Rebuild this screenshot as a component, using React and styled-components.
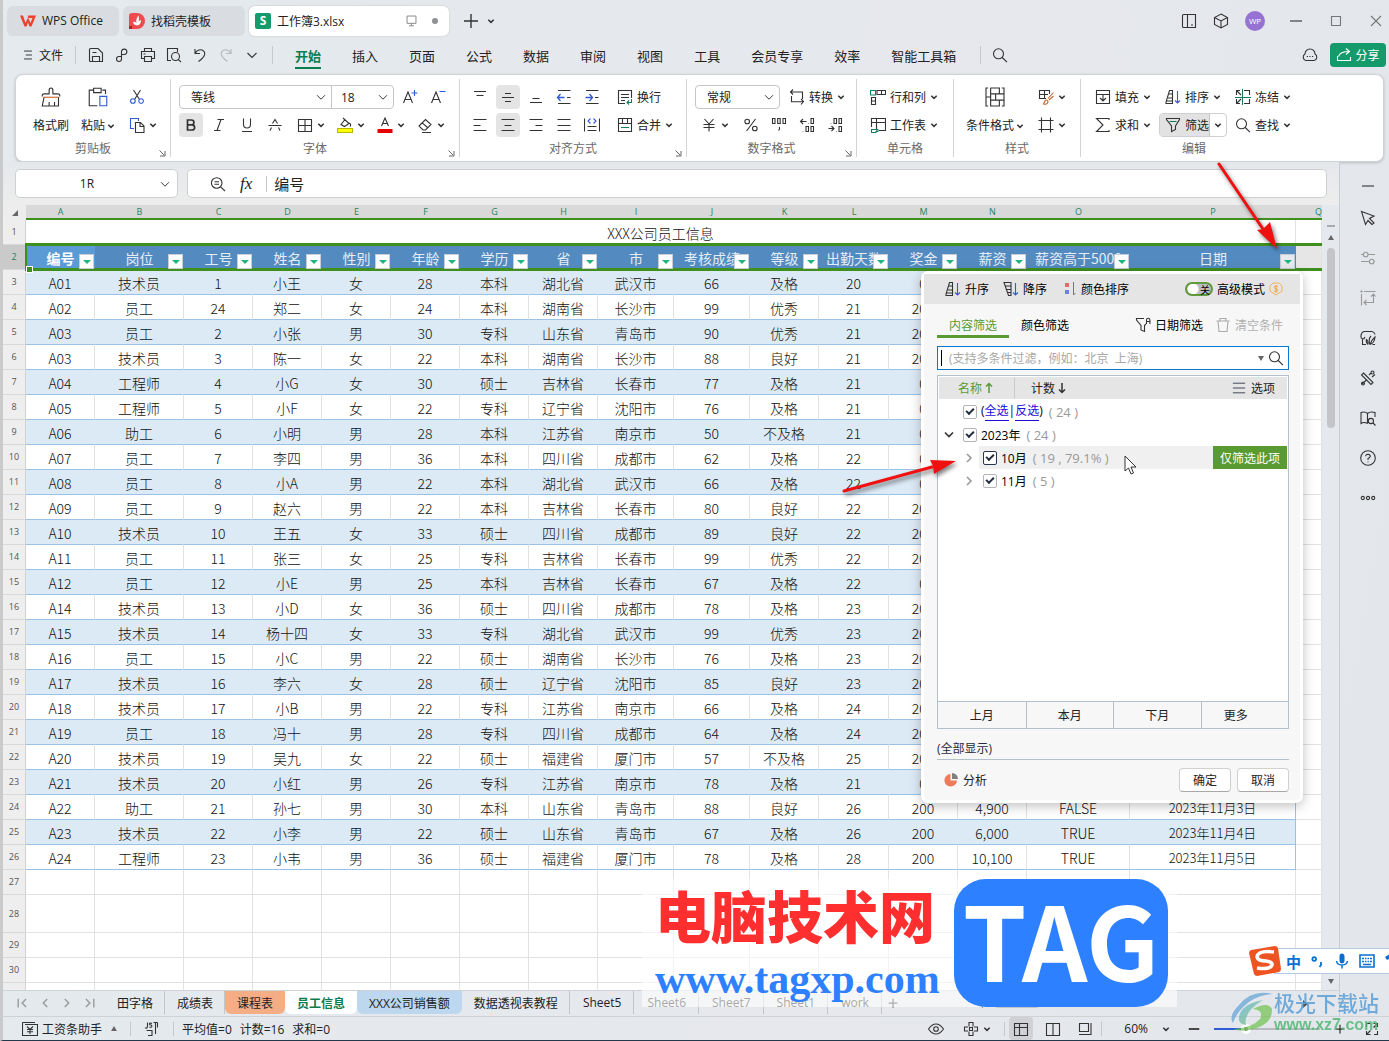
import React from "react";
import styled, { createGlobalStyle, css } from "styled-components";

const INK = "#333";
const BLUE = "#2f5bd8";
const GREEN = "#13805a";
const ORANGE = "#c8642c";
const GREY = "#999";

/* every entry is a list of [path, colour, filled, stroke width] on a 16 x 16 grid */
const ICONS = {
  menu: [["M3.5 3.5H12.5M5.5 8H12.5M3.5 12.5H12.5"]],
  save: [["M1.5 14V2.5Q1.5 1.5 2.5 1.5H10L14.5 6V14.5H2.5Q1.5 14.5 1.5 13.5M4.5 14.5V9.5H11.5V14.5M4.5 5.5H8.5"]],
  link: [["M7 9.5H5A2.5 2.5 0 1 0 7.5 12V4.5A2.7 2.7 0 1 1 10.3 7.5H7"]],
  print: [["M4.5 4.5V1.5H11.5V4.5M4.5 11.5H1.5V4.5H14.5V11.5H11.5M4.5 9.5H11.5V14.5H4.5ZM3.5 7H5.5"]],
  preview: [["M5 13.5H1.5V1.5H11.5V5M15 15L12.3 12.3M13.5 9.5A4 4 0 1 1 5.5 9.5A4 4 0 1 1 13.5 9.5"]],
  undo: [["M3 2V6.5H8M3 6.3Q6 2 10 3Q13.5 4.5 12.5 8Q11.5 11 6.5 14.5"]],
  redo: [["M13 2V6.5H8M13 6.3Q10 2 6 3Q2.5 4.5 3.5 8Q4.5 11 9.5 14.5", "#b5b8bc"]],
  down: [["M3.5 6L8 10.5L12.5 6"]],
  search: [["M11.5 6.8A5 5 0 1 1 1.5 6.8A5 5 0 1 1 11.5 6.8M10.2 10.5L15 15.2"]],
  zoomOut: [["M12 7A5.3 5.3 0 1 1 1.4 7A5.3 5.3 0 1 1 12 7M10.6 10.8L15 15M4.5 5.8H9M4.5 8.2H9"]],
  plus: [["M8 1V15M1 8H15"]],
  minus: [["M2 8H14"]],
  monitor: [["M2.5 2.5H13.5V11.5H2.5ZM8 11.5V14M5 14.5H11", "#888"]],
  panels: [["M6.5 1.5H2.5Q1.5 1.5 1.5 2.5V13.5Q1.5 14.5 2.5 14.5H6.5M6.5 1.5H14.5V14.5H6.5ZM10 12H12"]],
  cube: [["M8 1L14.5 4.5V11.5L8 15L1.5 11.5V4.5ZM1.5 4.5L8 8L14.5 4.5M8 8V15"]],
  square: [["M3.5 3.5H12.5V12.5H3.5Z", "#777"]],
  close: [["M3 3L13 13M13 3L3 13", "#777"]],
  cloud: [["M4 13.5A3.5 3.5 0 0 1 3 7A5 5 0 0 1 13 7A3.5 3.5 0 0 1 12 13.5Z"], ["M4.8 9.5H6M7.4 9.5H8.6M10 9.5H11.2"]],
  share: [["M1.5 9V13.5H14.5V10M2.5 9.5Q4 4.5 13 4.5M10 1.5L13.5 4.5L10 7.5", "#fff"]],
  brush: [["M1 7.5V6.5Q1 5.5 2.5 5.5H6.5V2.5Q6.5 .8 8 .8Q9.500 .8 9.500 2.500V5.500H13.500Q15 5.500 15 6.500V7.500M2.500 8L1 15.200H14V8M10.800 12V15M6.500 12V15"], ["M2 8.200H14", ORANGE]],
  paste: [["M4.500 2.500H1V15H7.500M11.500 2.500H14V5.500M4.500 1H10.500V4.500H4.500Z"], ["M9.500 7.500H15V15H9.500Z", BLUE]],
  cut: [["M4.5 1L10.5 10.5M11.5 1L5.5 10.5"], ["M6.2 12A2.3 2.3 0 1 1 1.6 12A2.3 2.3 0 1 1 6.2 12M14.4 12A2.3 2.3 0 1 1 9.8 12A2.3 2.3 0 1 1 14.4 12", BLUE]],
  copy: [["M5 11.5H1.5V1.5H9.5V4", BLUE], ["M6.5 5.5H11.5L15 9V15.5H6.5ZM11 5.5V9.5H15"]],
  bold: [["M4.5 3H8.5A2.4 2.4 0 0 1 8.5 7.8H4.5ZM4.5 7.8H9A2.6 2.6 0 0 1 9 13H4.5Z", "#333", false, 1.7]],
  italic: [["M6.5 2.5H13M3 13.5H9.5M10 2.5L6 13.5"]],
  under: [["M4.5 1.5V7.5A3.5 3.5 0 0 0 11.5 7.5V1.5M3 14.5H13"]],
  strike: [["M1.5 8.5H14.5M5.5 6.5L8 2.5L10.5 6.5M4.5 10.5L3 13.5M11.5 10.5L13 13.5"]],
  border: [["M1.5 2.5H14.5V14.5H1.5ZM8 2.5V14.5M1.5 8.5H14.5"]],
  fill: [["M6 1L12 6.5L7.5 9.5L4 7.5L8 2.5M12.5 6Q14.5 8 13 9.5"], ["M.5 11.5H15.5V15.5H.5Z", "#b8b800"], ["M1 12H15V15H1Z", "#ffff00", true]],
  color: [["M4.5 9L8 1L11.5 9M5.5 6.5H10.5"], ["M.5 12H15.5V16H.5Z", "#e60000", true]],
  eraser: [["M2 9L8.5 2.5L14 7.5L8.5 13H6ZM5 5.7L11 11M5 15.5H14"]],
  bigger: [["M1.5 14L6 3L10.5 14M3.5 10.5H8.5"], ["M12.5 1V7M9.5 4H15.5", BLUE]],
  smaller: [["M1.5 14L6 3L10.5 14M3.5 10.5H8.5"], ["M9.5 2.5H15.5", BLUE]],
  top: [["M2 2.5H14M4.5 6.5H11.5"]],
  middle: [["M5 4.5H11M2 8.5H14M5 12.5H11"]],
  bottom: [["M4.5 9.5H11.5M2 13.5H14"]],
  outdent: [["M2 1.5H14.5M2 14.5H14.5M11 8.5H14.5"], ["M8.5 8.5H1.5M4.5 5L1.5 8.5L4.5 12", BLUE, false, 1.3]],
  indent: [["M2 1.5H14.5M2 14.5H14.5M11 8.5H14.5"], ["M1.5 8.5H8.5M5.5 5L8.5 8.5L5.5 12", BLUE, false, 1.3]],
  left: [["M1.5 2.5H14.5M1.5 8.5H8.5M1.5 13.5H14.5"]],
  center: [["M1.5 2.5H14.5M4.5 8.5H11.5M1.5 13.5H14.5"]],
  right: [["M1.5 2.5H14.5M7.5 8.5H14.5M1.5 13.5H14.5"]],
  justify: [["M1.5 2.5H14.5M1.5 8.5H14.5M1.5 13.5H14.5"]],
  spread: [["M.5 1.5V14.5M15.5 1.5V14.5M3.5 9.5H12.5M3.5 13.5H12.5"], ["M6.5 1.5L4 4L6.5 6.5M9.5 1.5L12 4L9.5 6.5", BLUE]],
  wrap: [["M8 14.5H1.5V1.5H14.5V9M4 5.5H12M4 8.5H12M4 11.5H8"], ["M14.5 10V13.5H10M12 11.5L10 13.5L12 15.5", GREEN]],
  merge: [["M1.5 1.5H14.5V14.5H1.5ZM1.5 6.5H14.5M5.5 1.5V6.5M10.5 1.5V6.5"], ["M4 10.5H12", GREEN]],
  convert: [["M4 .5L1.5 3L4 5.5M1.5 3H13.5V10M12 10L14.5 12.5L12 15.5M14.5 12.8H2.5V7"]],
  yen: [["M3.5 2L8 7L12.5 2M8 7V14.5M2.5 7.5H13.5M2.5 10.5H13.5"]],
  percent: [["M12.5 2L3.5 14M6.5 4.5A2.3 2.3 0 1 1 1.9 4.5A2.3 2.3 0 1 1 6.5 4.5M14.1 11.5A2.3 2.3 0 1 1 9.5 11.5A2.3 2.3 0 1 1 14.1 11.5"]],
  comma: [["M1.5 1.5H4V6.5H1.5ZM6.7 1.5H9.2V6.5H6.7ZM12 1.5H14.5V6.5H12ZM8.5 10V12L7.5 13.5"]],
  decMore: [["M7.5 4.5H1.5M4 2L1.5 4.5L4 7M9.5 6.5V7M12 1.5H14.5V6.5H12ZM4 14V14.5M7 9.5H9.5V14.5H7ZM12 9.5H14.5V14.5H12Z"]],
  decLess: [["M1.5 11.5H7M4.5 9L7 11.5L4.5 14M4 6V6.5M7 1.5H9.5V6.5H7ZM12 1.5H14.5V6.5H12ZM9.5 14V14.5M12 9.5H14.5V14.5H12Z"]],
  rows: [["M1.5 8.5H5.5V15.5H1.5ZM1.5 12H5.5M7 1.5H15.5V5.5H7ZM11.5 1.5V5.5"], ["M.5 1.5H5.5V6H.5Z", GREEN]],
  sheet: [["M9 13.5H15.5V1.5H1.5V10M1.5 5.5H15.5M6.5 1.5V13.5"], ["M1.5 12.5H8V14.5H6V15.5H1.5Z", GREEN]],
  cond: [["M2.500 .8H.8V15.200H2.500M13.500 .8H15.200V15.200H13.500M4.500 .5V15.500M4.500 .8H11.500V5.500M11.500 10.500V15.200H4.500M4.500 5.500H15M4.500 10.500H15M8.500 5.500V10.500M.8 8H4.500"]],
  style: [["M8 9.5H1.5V1.5H11.5V5M1.5 5.5H10M6.5 1.5V9.5"], ["M15.5 3.5L10 9.5M15.5 7L11 11M5.5 15Q9 16 10 13Q10 11 8.5 11Q7 11 6.5 13Z", ORANGE]],
  frame: [["M3.5 .5V15.5M12.5 .5V15.5M.5 3.5H15.5M.5 12.5H15.5"]],
  insert: [["M4 5.5H1.5V1.5H14.5V5.5H12M1.5 5.5V14.5H14.5V5.5M4 5.5H12M8 5.5V11.5M5 9L8 12L11 9"]],
  sum: [["M14 3V1.5H1.5L8 8L1.5 14.5H14V13"]],
  sort: [["M4.5 1.5H7.5V14.5H1V13ZM4 5H7.5M3 9H7.5M1.5 12H7.5"], ["M12.5 2V14M10 11.5L12.5 14L15 11.5", BLUE]],
  sortDesc: [["M1 1.5H8V14.5H5.5ZM2 5H8M3 8.5H8M5 11.5H8"], ["M12.5 2V14M10 11.5L12.5 14L15 11.5", BLUE]],
  filter: [["M1.5 2.5V1.5H14.5V2.5L10.5 9V12.5L6.5 14.5V9ZM10.5 9V12.5"], ["M4.5 4.5H11.5", GREEN]],
  freeze: [["M5 1.5H1.5V6M1.5 1.5L6 6M9 1.5H14.5V6M1.5 10V14.5H5M2 14L6 10M9 14.5H14.5V10"], ["M0 8.5H16M7.5 0V16", GREEN]],
  cursor: [["M1.5 1.5L14 6L9.5 8.5L14 13L12 14.5L8 10.5L5.5 14.5Z"]],
  sliders: [["M1 4.5H3M8 4.5H15M1 11.5H9M14 11.5H15M8 4.5A2.3 2.3 0 1 1 3.4 4.5A2.3 2.3 0 1 1 8 4.5M14 11.5A2.3 2.3 0 1 1 9.4 11.5A2.3 2.3 0 1 1 14 11.5", GREY]],
  swap: [["M1.5 4V15.5M4 1.5H15.5M4 12.5H13.5V4.5M11 6.5L13.5 4L15.5 6.5M6.5 10L4 12.5L6.5 15", GREY], ["M.5.5H2.5V2.5H.5Z", GREY, true]],
  leafBox: [["M6 14.500H2.500V9M2.500 9Q.5 8 1 5.500Q1.500 2 4 1.500H12Q14.500 2 15 4.500M2.500 9Q4.500 9 5 7M8 14.500Q5.500 12 6.500 9.500Q8.500 11 8 14.500M10 14.500Q8 9 11 6M10 14.500Q14.500 13 15 7Q11.500 10 10 14.500M12.500 14.500H15"]],
  tools: [["M3.5 3L13 12.5L11 14.5L1.5 5ZM9 5L11.5 2.5M2 14L7 9.5M15 4.5L12 7M3 12A1.5 1.5 0 1 0 3 15A1.5 1.5 0 1 0 3 12M12.5 1A1.5 1.5 0 1 0 12.5 4A1.5 1.5 0 1 0 12.5 1"]],
  book: [["M7.5 13.5Q4 11.5 1 13.5V2.5Q5 1 7.5 3.5Q10 1 15 2.5V7M7.5 3.5V13.5M13.5 11A2.6 2.6 0 1 1 8.3 11A2.6 2.6 0 1 1 13.5 11M13 13L15.5 15.5"]],
  help: [["M15.3 8A7.3 7.3 0 1 1 .7 8A7.3 7.3 0 1 1 15.3 8M5.7 6.3Q5.8 4.3 8 4.3Q10.3 4.5 10.2 6.3Q10 7.5 8 8.5V10M8 11.5V12.3"]],
  more: [["M4.400 8A1.600 1.600 0 1 1 1.200 8A1.600 1.600 0 1 1 4.400 8M9.600 8A1.600 1.600 0 1 1 6.400 8A1.600 1.600 0 1 1 9.600 8M14.800 8A1.600 1.600 0 1 1 11.600 8A1.600 1.600 0 1 1 14.800 8"]],
  first: [["M2.5 3V13M11.5 3.5L7 8L11.5 12.5", GREY]],
  prev: [["M10.5 3.5L6 8L10.5 12.5", GREY]],
  next: [["M5.5 3.5L10 8L5.5 12.5", GREY]],
  last: [["M13.5 3V13M4.5 3.5L9 8L4.5 12.5", GREY]],
  salary: [["M.5 1.5H13M.5 1.5V14.5H15.5V3.5H3M5 5.5L8 8.5L11 5.5M8 8.5V13M5 8.5H11M5 10.8H11"]],
  stp: [["M1.5 6.5V7Q3.5 7.5 3.5 5V1.5M8 2.5Q5.5 1.5 5.5 3Q5.5 4 7 4Q8.5 5 7.5 6Q6 6.5 5.5 6M9.5 1.5H13.5M11.5 1.5V13M13.5 1.5V6.5M2.5 9.5H8V14.5H4"]],
  eye: [["M.5 8Q4 3 8 3Q12 3 15.5 8Q12 13 8 13Q4 13 .5 8ZM10.3 8A2.3 2.3 0 1 1 5.7 8A2.3 2.3 0 1 1 10.3 8"]],
  target: [["M6 5.5V1.5H10V5.5M6 10.5V14.5H10V10.5M5 6H1.5V10H5M11 6H14.5V10H11M6.5 6.5H9.5V9.5H6.5Z"]],
  gridView: [["M1.5 2.5H14.5V14.5H1.5ZM1.5 6.5H14.5M6.5 2.5V14.5"]],
  pages: [["M1.5 2.5H14.5V14.5H1.5ZM8 2.5V14.5"]],
  layout: [["M2.5 2.5H11.5V10.5H2.5ZM14 2V13.5H2"]],
  full: [["M9.5 2.5H13.5V6M13.5 2.5L9.5 6.5M6.5 13.5H2.5V10M2.5 13.5L6.5 9.5M2.5 6V2.5H6M13.5 10V13.5H10"]],
  lines: [["M1 2.5H15M1 8H15M1 13.5H15", "#3d4453"]],
  dateFilter: [["M9 1.5H1.5V3L6 8.5V13L9.5 14.5V8.5L11 7M11.5 7V3A1.7 1.7 0 0 1 14.9 3V7M11.5 4.5H14.9"]],
  trash: [["M1.5 4H14.5M5 3.5V1.5H11V3.5M3 4L4 14.5H12L13 4", "#aaa"]],
};

const Svg = styled.svg`
  display: block;
  flex: none;
`;

const Icon = ({ name, size = 16, width = 1.1 }) => (
  <Svg width={size} height={size} viewBox="0 0 16 16" fill="none" aria-hidden="true">
    {ICONS[name].map(([d, color = INK, filled, w], i) => (
      <path
        key={i}
        d={d}
        stroke={filled ? "none" : color}
        fill={filled ? color : "none"}
        strokeWidth={w || width}
      />
    ))}
  </Svg>
);

const Caret = () => (
  <Svg width="8" height="8" viewBox="0 0 8 8" fill="none" aria-hidden="true">
    <path d="M1.3 2.8L4 5.4L6.7 2.8" stroke="#333" strokeWidth="1.5" />
  </Svg>
);

export default function App() {
  return (
    <Window>
      <GlobalStyle />
      <TitleBar />
      <MenuBar />
      <Ribbon />
      <Body>
        <Workspace>
          <FormulaBar />
          <SheetArea>
            <Sheet />
            <ScrollTrack>
              <Minus />
              <Triangle />
              <ScrollThumb />
              <Triangle $down />
            </ScrollTrack>
            <FilterPanel />
            <TagMark />
          </SheetArea>
          <SheetTabs />
        </Workspace>
        <SidePane>
          {["minus", "cursor", "sliders", "swap", "leafBox", "tools", "book", "help", "more"].map((n) => (
            <SideButton key={n} aria-label={n}>
              <Icon name={n} />
            </SideButton>
          ))}
        </SidePane>
      </Body>
      <StatusBar />
      <Ime />
      <Arrows />
      <SiteMark />
    </Window>
  );
}

function TitleBar() {
  return (
    <Title>
      <DocTab $w={112}>
        <Svg width="16" height="12" viewBox="0 0 16 12" fill="none">
          <path d="M0 .5H3L5.500 8L8 2.500L10.500 8L12.500 3H8V.5H16L11.500 11.500H9.500L8 7.500L6.500 11.500H4.500Z" fill="#f0402c" />
        </Svg>
        WPS Office
      </DocTab>
      <DocTab $w={122}>
        <Svg width="16" height="16" viewBox="0 0 16 16">
          <path d="M3 0H8A8 8 0 0 1 8 16H0V3Q0 0 3 0Z" fill="#ee4b4f" />
          <path d="M0 13H3V16H0Z" fill="#a8262c" />
          <path d="M4 9Q6 8 7.5 10Q6.500 6 9.500 2.500Q10.500 6 9.500 8.500Q11 7 12 7Q12 12 8 12.500Q4.500 12 4 9Z" fill="#fff" />
        </Svg>
        找稻壳模板
      </DocTab>
      <DocTab $w={200} $active>
        <SheetLogo>S</SheetLogo>
        <span>工作簿3.xlsx</span>
        <TabTools>
          <Icon name="monitor" size={13} width={1.2} />
          <Dot />
        </TabTools>
      </DocTab>
      <TitleButton aria-label="新建">
        <Icon name="plus" width={1.4} />
      </TitleButton>
      <Caret />
      <TitleRight>
        <Icon name="panels" />
        <Icon name="cube" />
        <Avatar>WP</Avatar>
        <WindowButtons>
          <Icon name="minus" />
          <Icon name="square" />
          <Icon name="close" />
        </WindowButtons>
      </TitleRight>
    </Title>
  );
}

function MenuBar() {
  const menus = ["开始", "插入", "页面", "公式", "数据", "审阅", "视图", "工具", "会员专享", "效率", "智能工具箱"];
  return (
    <Menu>
      <FileButton>
        <Icon name="menu" size={14} />
        文件
      </FileButton>
      <Rule $h={18} />
      <QuickTools>
        {["save", "link", "print", "preview", "undo", "redo", "down"].map((n) => (
          <QuickButton key={n} aria-label={n}>
            <Icon name={n} />
          </QuickButton>
        ))}
      </QuickTools>
      <Rule $h={18} />
      <MenuTabs>
        {menus.map((m, i) => (
          <MenuTab key={m} $active={i === 0}>{m}</MenuTab>
        ))}
      </MenuTabs>
      <Rule $h={18} />
      <QuickButton aria-label="搜索">
        <Icon name="search" />
      </QuickButton>
      <MenuRight>
        <Icon name="cloud" />
        <ShareButton>
          <Icon name="share" />
          分享
        </ShareButton>
      </MenuRight>
    </Menu>
  );
}

const Tools = ({ names, active }) =>
  names.map((n) => (
    <ToolButton key={n} $active={n === active} aria-label={n}>
      <Icon name={n} />
    </ToolButton>
  ));

const SplitTool = ({ name }) => (
  <SplitButton aria-label={name}>
    <Icon name={name} />
    <Caret />
  </SplitButton>
);

const TextTool = ({ name, caret = true, children }) => (
  <TextButton>
    <Icon name={name} />
    {children}
    {caret && <Caret />}
  </TextButton>
);

const Group = ({ label, width, pad, launcher, children }) => (
  <RibbonGroup $w={width}>
    <GroupBody $pad={pad}>{children}</GroupBody>
    <GroupFoot>
      <GroupLabel>{label}</GroupLabel>
      {launcher && (
        <Launcher aria-label={label + "设置"}>
          <Svg width="7" height="7" viewBox="0 0 7 7" fill="none">
            <path d="M.5.5L5 5M6 1V6H1" stroke="#666" />
          </Svg>
        </Launcher>
      )}
    </GroupFoot>
  </RibbonGroup>
);

function Ribbon() {
  return (
    <RibbonCard>
      <Group label="剪贴板" width={155} pad={17} launcher>
        <ToolColumns $gap={12}>
          <BigButton>
            <Icon name="brush" size={20} width={0.9} />
            <span>格式刷</span>
          </BigButton>
          <BigButton>
            <Icon name="paste" size={20} width={0.9} />
            <BigLabel>粘贴<Caret /></BigLabel>
          </BigButton>
          <ToolStack>
            <ToolRow>
              <SplitButton aria-label="剪切"><Icon name="cut" /></SplitButton>
            </ToolRow>
            <ToolRow><SplitTool name="copy" /></ToolRow>
          </ToolStack>
        </ToolColumns>
      </Group>
      <Group label="字体" width={289} pad={8} launcher>
        <ToolRow>
          <Combo $w={153} $join="left">
            <select aria-label="字体" defaultValue="等线"><option>等线</option></select>
            <Icon name="down" size={14} />
          </Combo>
          <Combo $w={63} $join="right">
            <select aria-label="字号" defaultValue="18"><option>18</option></select>
            <Icon name="down" size={14} />
          </Combo>
          <Tools names={["bigger", "smaller"]} />
        </ToolRow>
        <ToolRow>
          <Tools names={["bold", "italic", "under", "strike"]} active="bold" />
          <SplitTool name="border" />
          <SplitTool name="fill" />
          <SplitTool name="color" />
          <SplitTool name="eraser" />
        </ToolRow>
      </Group>
      <Group label="对齐方式" width={227} pad={8} launcher>
        <ToolRow>
          <Tools names={["top", "middle", "bottom", "outdent", "indent"]} active="middle" />
          <Spacer />
          <TextTool name="wrap" caret={false}>换行</TextTool>
        </ToolRow>
        <ToolRow>
          <Tools names={["left", "center", "right", "justify", "spread"]} active="center" />
          <Spacer />
          <TextTool name="merge">合并</TextTool>
        </ToolRow>
      </Group>
      <Group label="数字格式" width={170} pad={8} launcher>
        <ToolRow>
          <Combo $w={85}>
            <select aria-label="数字格式" defaultValue="常规"><option>常规</option></select>
            <Icon name="down" size={14} />
          </Combo>
          <TextTool name="convert">转换</TextTool>
        </ToolRow>
        <ToolRow>
          <SplitTool name="yen" />
          <Spacer />
          <Tools names={["percent", "comma", "decMore", "decLess"]} />
        </ToolRow>
      </Group>
      <Group label="单元格" width={97} pad={8}>
        <ToolRow><TextTool name="rows">行和列</TextTool></ToolRow>
        <ToolRow><TextTool name="sheet">工作表</TextTool></ToolRow>
      </Group>
      <Group label="样式" width={127} pad={12}>
        <ToolColumns $gap={12}>
          <BigButton>
            <Icon name="cond" size={20} width={0.9} />
            <BigLabel>条件格式<Caret /></BigLabel>
          </BigButton>
          <ToolStack>
            <ToolRow><SplitTool name="style" /></ToolRow>
            <ToolRow><SplitTool name="frame" /></ToolRow>
          </ToolStack>
        </ToolColumns>
      </Group>
      <Group label="编辑" width={226} pad={9}>
        <ToolRow>
          <TextTool name="insert">填充</TextTool>
          <TextTool name="sort">排序</TextTool>
          <TextTool name="freeze">冻结</TextTool>
        </ToolRow>
        <ToolRow>
          <TextTool name="sum">求和</TextTool>
          <FilterSplit>
            <button><Icon name="filter" />筛选</button>
            <button aria-label="筛选选项"><Caret /></button>
          </FilterSplit>
          <TextTool name="search">查找</TextTool>
        </ToolRow>
      </Group>
    </RibbonCard>
  );
}

function FormulaBar() {
  return (
    <Formula>
      <NameBox>
        <input aria-label="名称框" defaultValue="1R" />
        <Icon name="down" size={14} />
      </NameBox>
      <FormulaBox>
        <Icon name="zoomOut" />
        <Fx>fx</Fx>
        <Rule $h={16} />
        <input aria-label="编辑栏" defaultValue="编号" />
      </FormulaBox>
    </Formula>
  );
}

const COLUMNS = [
  ["A", 69, "编号"], ["B", 89, "岗位"], ["C", 69, "工号"], ["D", 69, "姓名"],
  ["E", 69, "性别"], ["F", 69, "年龄"], ["G", 69, "学历"], ["H", 69, "省"],
  ["I", 76, "市"], ["J", 76, "考核成绩"], ["K", 69, "等级"], ["L", 70, "出勤天数"],
  ["M", 69, "奖金"], ["N", 69, "薪资"], ["O", 103, "薪资高于5000"], ["P", 166, "日期"],
];

const ROWS = `A01,技术员,1,小王,女,28,本科,湖北省,武汉市,66,及格,20,0
A02,员工,24,郑二,女,24,本科,湖南省,长沙市,99,优秀,21,200
A03,员工,2,小张,男,30,专科,山东省,青岛市,90,优秀,21,200
A03,技术员,3,陈一,女,22,本科,湖南省,长沙市,88,良好,21,200
A04,工程师,4,小G,女,30,硕士,吉林省,长春市,77,及格,21,0
A05,工程师,5,小F,女,22,专科,辽宁省,沈阳市,76,及格,21,0
A06,助工,6,小明,男,28,本科,江苏省,南京市,50,不及格,21,0
A07,员工,7,李四,男,36,本科,四川省,成都市,62,及格,22,0
A08,员工,8,小A,男,22,本科,湖北省,武汉市,66,及格,22,0
A09,员工,9,赵六,男,22,本科,吉林省,长春市,80,良好,22,200
A10,技术员,10,王五,女,33,硕士,四川省,成都市,89,良好,22,200
A11,员工,11,张三,女,25,专科,吉林省,长春市,99,优秀,22,200
A12,员工,12,小E,男,25,本科,吉林省,长春市,67,及格,22,0
A14,技术员,13,小D,女,36,硕士,四川省,成都市,78,及格,23,200
A15,技术员,14,杨十四,女,33,专科,湖北省,武汉市,99,优秀,23,200
A16,员工,15,小C,男,22,硕士,湖南省,长沙市,76,及格,23,200
A17,技术员,16,李六,女,28,硕士,辽宁省,沈阳市,85,良好,23,200
A18,技术员,17,小B,男,22,专科,江苏省,南京市,66,及格,24,200
A19,员工,18,冯十,男,28,专科,四川省,成都市,64,及格,24,200
A20,技术员,19,吴九,女,22,硕士,福建省,厦门市,57,不及格,25,200
A21,技术员,20,小红,男,26,专科,江苏省,南京市,78,及格,21,0
A22,助工,21,孙七,男,30,本科,山东省,青岛市,88,良好,26,200,4;900,FALSE,2023年11月3日
A23,技术员,22,小李,男,22,硕士,山东省,青岛市,67,及格,26,200,6;000,TRUE,2023年11月4日
A24,工程师,23,小韦,男,36,硕士,福建省,厦门市,78,及格,28,200,10;100,TRUE,2023年11月5日`
  .split("\n")
  .map((line) => line.split(",").map((v) => v.replace(";", ",")));

function Sheet() {
  return (
    <SheetPane>
      <Table>
        <colgroup>
          <Col $w={23} />
          {COLUMNS.map(([k, w]) => <Col key={k} $w={w} />)}
          <col />
        </colgroup>
        <thead>
          <tr>
            <Corner aria-label="全选"><i /></Corner>
            {COLUMNS.map(([k]) => <ColHead key={k}>{k}</ColHead>)}
            <ColHead $cut>Q</ColHead>
          </tr>
        </thead>
        <tbody>
          <tr>
            <RowHead>1</RowHead>
            <Cell colSpan={16}>XXX公司员工信息</Cell>
            <Cell />
          </tr>
          <tr>
            <RowHead $active>2</RowHead>
            {COLUMNS.map(([k, , name], i) => (
              <HeadCell key={k} $first={i === 0}>
                {name}
                <FilterArrow aria-label={name + "筛选"} $dim={k === "P"} />
              </HeadCell>
            ))}
            <Cell $tail />
          </tr>
          {ROWS.map((row, r) => (
            <tr key={r}>
              <RowHead>{r + 3}</RowHead>
              {COLUMNS.map(([k], c) => (
                <Cell key={k} $data $band={r % 2 === 0} $date={k === "P"}>{row[c]}</Cell>
              ))}
              <Cell />
            </tr>
          ))}
          {["27", "28", "29", "30", ""].map((n) => (
            <tr key={n}>
              <RowHead $tall={n === "28"}>{n}</RowHead>
              {COLUMNS.map(([k]) => <Cell key={k} />)}
              <Cell />
            </tr>
          ))}
        </tbody>
      </Table>
      <Selection />
      <FillHandle />
    </SheetPane>
  );
}

const TreeItem = ({ level, open, checked = true, count, active, children }) => (
  <TreeRow $level={level}>
    <Expander aria-label="展开">
      {open !== undefined && (
        <Svg width="10" height="10" viewBox="0 0 10 10" fill="none">
          <path d={open ? "M1 2.500L5 6.500L9 2.500" : "M3 1L7 5L3 9"} stroke={open ? "#333" : "#999"} strokeWidth="1.6" />
        </Svg>
      )}
    </Expander>
    <TreeLine $active={active}>
      <Check>
        <input type="checkbox" defaultChecked={checked} />
        {children}
      </Check>
      <Count>{count}</Count>
      {active && <OnlyButton>仅筛选此项</OnlyButton>}
    </TreeLine>
  </TreeRow>
);

function FilterPanel() {
  return (
    <Panel>
      <PanelTop>
        <PanelTool><Icon name="sort" />升序</PanelTool>
        <PanelTool><Icon name="sortDesc" />降序</PanelTool>
        <PanelTool>
          <Svg width="16" height="14" viewBox="-4 0 16 14" fill="none">
            <path d="M0 1H4V5H0Z" fill="#e86a6a" />
            <path d="M0 8H4V12H0Z" fill="#6a7fe8" />
            <path d="M8.500 0V13L10.500 11" stroke="#777" />
          </Svg>
          颜色排序
        </PanelTool>
        <ModeLabel>
          <Switch type="checkbox" />
          <SwitchText>关</SwitchText>
          高级模式
          <Svg width="14" height="14" viewBox="0 0 14 14" fill="none">
            <path d="M4 1H10L13 4V9L7 13L1 9V4Z" stroke="#f0b35a" />
            <path d="M9 4.500Q5 3.500 5.200 5.500Q5.500 6.500 7 6.700Q9 7 8.800 8.500Q8 10 5 9M7 3V11" stroke="#f0a53c" />
          </Svg>
        </ModeLabel>
      </PanelTop>
      <PanelBody>
        <PanelTabs>
          <PanelTab $active>内容筛选</PanelTab>
          <PanelTab>颜色筛选</PanelTab>
          <PanelActions>
            <PanelTool><Icon name="dateFilter" />日期筛选</PanelTool>
            <PanelTool $muted><Icon name="trash" />清空条件</PanelTool>
          </PanelActions>
        </PanelTabs>
        <SearchBox>
          <TextCaret />
          <input aria-label="搜索" placeholder="(支持多条件过滤，例如：北京  上海)" />
          <Triangle $down />
          <Icon name="search" />
        </SearchBox>
        <Tree>
          <TreeHead>
            <TreeName>
              名称
              <Svg width="8" height="12" viewBox="0 0 8 12" fill="none">
                <path d="M4 11V1.500M1 4.500L4 1.500L7 4.500" stroke="#5a9a32" strokeWidth="1.500" />
              </Svg>
            </TreeName>
            <TreeCount>
              计数
              <Svg width="8" height="12" viewBox="0 0 8 12" fill="none">
                <path d="M4 1V10.500M1 7.500L4 10.500L7 7.500" stroke="#333" strokeWidth="1.500" />
              </Svg>
            </TreeCount>
            <TreeOptions><Icon name="lines" size={14} />选项</TreeOptions>
          </TreeHead>
          <TreeBody>
            <TreeItem level={0} count="( 24 )">
              <span>(<a href="#all">全选</a>|<a href="#invert">反选</a>)</span>
            </TreeItem>
            <TreeItem level={0} open count="( 24 )">2023年</TreeItem>
            <TreeItem level={1} open={false} count="( 19 , 79.1% )" active>10月</TreeItem>
            <TreeItem level={1} open={false} count="( 5 )">11月</TreeItem>
          </TreeBody>
          <TreeFoot>
            {["上月", "本月", "下月", "更多"].map((t) => <button key={t}>{t}</button>)}
          </TreeFoot>
        </Tree>
        <ShowAll>(全部显示)</ShowAll>
        <PanelFoot>
          <Analyse>
            <Svg width="14" height="14" viewBox="0 0 14 14">
              <path d="M6.500 1V7.500H13A6.300 6.300 0 1 1 6.500 1Z" fill="#f07a5c" />
              <path d="M8 0A6 6 0 0 1 14 6H8Z" fill="#808080" />
            </Svg>
            分析
          </Analyse>
          <DialogButton>确定</DialogButton>
          <DialogButton>取消</DialogButton>
        </PanelFoot>
      </PanelBody>
      <Pointer width="13" height="20" viewBox="0 0 13 20">
        <path d="M1 1V16L4.500 13L7 19L9.500 18L7 12H12Z" fill="#fff" stroke="#333" />
      </Pointer>
    </Panel>
  );
}

function SheetTabs() {
  return (
    <TabsBar>
      <TabNav>
        {["first", "prev", "next", "last"].map((n) => (
          <NavButton key={n} aria-label={n}><Icon name={n} size={14} width={1.6} /></NavButton>
        ))}
      </TabNav>
      <SheetTab>田字格</SheetTab>
      <SheetTab>成绩表</SheetTab>
      <SheetTab $bg="#f4ad85">课程表</SheetTab>
      <SheetTab $bg="#fff" $active>员工信息</SheetTab>
      <SheetTab $bg="#bcd7ee">XXX公司销售额</SheetTab>
      <SheetTab>数据透视表教程</SheetTab>
      {["Sheet5", "Sheet6", "Sheet7", "Sheet1", "work"].map((t) => <SheetTab key={t} $latin>{t}</SheetTab>)}
      <NavButton aria-label="新建工作表"><Icon name="plus" size={10} width={2} /></NavButton>
      <HScroll>
        <Triangle $side="left" />
        <HThumb />
        <Triangle $side="right" />
      </HScroll>
    </TabsBar>
  );
}

function StatusBar() {
  return (
    <Status>
      <StatusTool><Icon name="salary" />工资条助手<StatusCaret /></StatusTool>
      <Rule $h={14} />
      <StatusTool $even><Icon name="stp" /></StatusTool>
      <Rule $h={14} />
      <Stats>
        <span>平均值=0</span>
        <span>计数=16</span>
        <span>求和=0</span>
      </Stats>
      <StatusTool><Icon name="eye" /></StatusTool>
      <StatusTool><Icon name="target" /><Caret /></StatusTool>
      <Rule $h={14} />
      <ViewButton $active aria-label="普通视图"><Icon name="gridView" /></ViewButton>
      <ViewButton aria-label="分页预览"><Icon name="pages" /></ViewButton>
      <ViewButton aria-label="页面布局"><Icon name="layout" /></ViewButton>
      <Rule $h={14} />
      <ZoomText>60%<Caret /></ZoomText>
      <ViewButton aria-label="缩小"><Icon name="minus" size={14} width={2} /></ViewButton>
      <Zoom type="range" aria-label="缩放" min="0" max="100" defaultValue="28" />
      <ViewButton aria-label="放大"><Icon name="plus" size={10} width={2} /></ViewButton>
      <ViewButton aria-label="全屏"><Icon name="full" /></ViewButton>
    </Status>
  );
}

const TagMark = () => (
  <TagOverlay>
    <TagWords>
      <TagTitle>电脑技术网</TagTitle>
      <TagUrl>www.tagxp.com</TagUrl>
    </TagWords>
    <TagLogo>TAG</TagLogo>
  </TagOverlay>
);

const SiteMark = () => (
  <SiteOverlay>
    <Svg width="44" height="42" viewBox="0 0 44 42">
      <defs>
        <linearGradient id="swirl" x1="0" y1="0" x2="1" y2="1">
          <stop offset="0" stopColor="#5aaee8" />
          <stop offset="1" stopColor="#6cc04a" />
        </linearGradient>
      </defs>
      <path d="M43 2Q22 -3 9 13Q-2 24 3 31Q7 19 19 10Q29 3 43 2Z" fill="#5b9fd6" opacity=".8" />
      <path d="M33 8Q11 12 9 25Q8 32 16 33Q13 20 33 8Z" fill="url(#swirl)" opacity=".8" />
      <path d="M23 17Q38 9 42 17Q43 30 27 36Q13 41 3 37Q22 36 30 27Q34 18 23 17Z" fill="#6cc04a" opacity=".8" />
    </Svg>
    <div>
      <SiteName>极光下载站</SiteName>
      <SiteUrl>www.xz7.com</SiteUrl>
    </div>
  </SiteOverlay>
);

const Ime = () => (
  <ImeBar>
    <Svg width="34" height="32" viewBox="0 0 34 32">
      <path d="M3 5L27 1Q29 1 30 3L33 24Q33 26 31 27L9 31Q7 31 6 29L1 8Q1 6 3 5Z" fill="#ee5322" />
      <path d="M26 7Q10 5 9 12Q10 16 18 16Q25 17 24 20Q22 25 9 23" fill="none" stroke="#fff" strokeWidth="3.500" />
    </Svg>
    <ImeText>中</ImeText>
    <Svg width="14" height="14" viewBox="0 0 14 14" fill="none">
      <path d="M5 5A1.800 1.800 0 1 1 1.400 5A1.800 1.800 0 1 1 5 5M10 8V11L8.500 13" stroke="#0a6fd0" strokeWidth="1.800" />
    </Svg>
    <Svg width="14" height="16" viewBox="0 0 14 16" fill="none">
      <path d="M4.500 3A2.500 2.500 0 0 1 9.500 3V8A2.500 2.500 0 0 1 4.500 8Z" fill="#0a6fd0" />
      <path d="M1.500 8Q2 12 7 12Q12 12 12.500 8M7 12V15.500" stroke="#0a6fd0" strokeWidth="1.500" />
    </Svg>
    <Svg width="16" height="14" viewBox="0 0 16 14" fill="none">
      <path d="M1 1H15V13H1ZM3 4.500H13M3 7.500H13M4 10.500H12" stroke="#0a6fd0" strokeWidth="1.600" />
      <path d="M5.500 3V9M8 3V9M10.500 3V9" stroke="#fff" />
    </Svg>
    <Svg width="16" height="14" viewBox="0 0 16 14">
      <path d="M0 3L5 0H11L16 3L14 6L12 5V14H4V5L2 6Z" fill="#0a6fd0" />
    </Svg>
  </ImeBar>
);

const Arrows = () => (
  <ArrowLayer width="440" height="350" viewBox="840 160 440 350">
    <path d="M1219 164L1263 229" stroke="#f01010" strokeWidth="3" strokeLinecap="round" />
    <path d="M1277 249L1257 230L1263 229L1270 222Z" fill="#f01010" />
    <path d="M844 491L932 467" stroke="#f01010" strokeWidth="3" strokeLinecap="round" />
    <path d="M956 461L930 460L933 466L934 474Z" fill="#f01010" />
  </ArrowLayer>
);

const GlobalStyle = createGlobalStyle`
  body {
    margin: 0;
    overflow: hidden;
  }
  *, *::before, *::after {
    box-sizing: border-box;
  }
  body, button, input, select {
    font-family: "Open Sans", "Noto Sans CJK SC", sans-serif;
    font-size: 12px;
    color: #222;
  }
  button {
    border: none;
    background: none;
    padding: 0;
    white-space: nowrap;
  }
  input {
    border: none;
    outline: none;
    background: transparent;
    min-width: 0;
    padding: 0;
  }
`;

const Window = styled.div`
  position: relative;
  display: flex;
  flex-direction: column;
  height: 100vh;
  overflow: hidden;
  border-left: 3px solid #c9cacb;
  border-bottom: 1px solid #23384a;
  background: linear-gradient(100deg, #e4eaed, #e6e8ed 60%, #e3e6ea);
`;

const Title = styled.header`
  display: flex;
  align-items: center;
  gap: 4px;
  height: 36px;
  padding: 5px 5px 0 4px;
`;

const DocTab = styled.div`
  display: flex;
  align-items: center;
  gap: 6px;
  width: ${(p) => p.$w}px;
  height: 30px;
  padding: 0 12px 0 ${(p) => (p.$active ? 6 : 13)}px;
  border-radius: 6px;
  background: ${(p) => (p.$active ? "#fff" : "#d9dde1")};
  box-shadow: ${(p) => (p.$active ? "0 0 2px #b8bcc0" : "none")};

  & + & {
    padding-left: 6px;
  }
`;

const SheetLogo = styled.b`
  width: 16px;
  height: 16px;
  border-radius: 2px;
  background: #149a6b;
  color: #fff;
  line-height: 16px;
  text-align: center;
`;

const TabTools = styled.span`
  display: flex;
  align-items: center;
  gap: 14px;
  margin-left: auto;
`;

const Dot = styled.i`
  width: 6px;
  height: 6px;
  margin-right: -1px;
  border-radius: 50%;
  background: #8f9194;
`;

const TitleButton = styled.button`
  padding: 0 4px 0 10px;
`;

const TitleRight = styled.div`
  display: flex;
  align-items: center;
  gap: 16px;
  margin-left: auto;
`;

const Avatar = styled.span`
  width: 20px;
  height: 20px;
  border-radius: 50%;
  background: #9673d2;
  color: #fff;
  font-size: 8px;
  line-height: 20px;
  text-align: center;
`;

const WindowButtons = styled.div`
  display: flex;
  gap: 24px;
  margin-left: 7px;
`;

const Menu = styled.nav`
  display: flex;
  align-items: center;
  height: 38px;
  padding: 0 3px 0 18px;
`;

const Rule = styled.i`
  flex: none;
  width: 1px;
  height: ${(p) => p.$h}px;
  background: #c6c9cc;
`;

const FileButton = styled.button`
  display: flex;
  align-items: center;
  gap: 4px;
  margin-right: 12px;
`;

const QuickTools = styled.div`
  display: flex;
  margin: 0 7px 0 7px;
`;

const QuickButton = styled.button`
  display: grid;
  place-items: center;
  width: 26px;
  height: 24px;

  ${Rule} + & {
    margin-left: 6px;
  }
`;

const MenuTabs = styled.div`
  display: flex;
  gap: 31px;
  padding: 0 24px 0 22px;
`;

const MenuTab = styled.button`
  height: 28px;
  border-bottom: 2px solid ${(p) => (p.$active ? "#0a7d50" : "transparent")};
  border-top: 2px solid transparent;
  color: ${(p) => (p.$active ? "#0a7d50" : "#222")};
  font-size: 13px;
  font-weight: ${(p) => (p.$active ? 700 : 400)};
`;

const MenuRight = styled.div`
  display: flex;
  align-items: center;
  gap: 12px;
  margin-left: auto;
`;

const ShareButton = styled.button`
  display: flex;
  align-items: center;
  justify-content: center;
  gap: 3px;
  width: 56px;
  height: 24px;
  border-radius: 4px;
  background: #149a6b;
  color: #fff;
`;

const RibbonCard = styled.section`
  display: flex;
  flex: none;
  height: 88px;
  margin: 0 5px 0 12px;
  padding: 4px 0;
  border: 1px solid #d0d3d6;
  border-radius: 8px;
  background: #fff;
  box-shadow: 0 1px 3px #b9bdc2;
`;

const RibbonGroup = styled.div`
  display: flex;
  flex-direction: column;
  width: ${(p) => p.$w}px;
  border-right: 1px solid #d4d4d4;

  &:last-child {
    border-right: none;
  }
`;

const GroupBody = styled.div`
  padding: 4px 0 0 ${(p) => p.$pad}px;
`;

const ToolRow = styled.div`
  display: flex;
  align-items: center;
  gap: 4px;
  height: 28px;
`;

const ToolColumns = styled.div`
  display: flex;
  gap: ${(p) => p.$gap}px;
`;

const ToolStack = styled.div`
  margin-left: -4px;
`;

const BigButton = styled.button`
  display: flex;
  flex-direction: column;
  align-items: center;
  justify-content: space-between;
  height: 52px;
  padding-top: 4px;
  line-height: 18px;
`;

const BigLabel = styled.span`
  display: flex;
  align-items: center;
  gap: 2px;
`;

const toolBase = css`
  display: flex;
  align-items: center;
  justify-content: center;
  height: 24px;
  border-radius: 4px;
`;

const ToolButton = styled.button`
  ${toolBase}
  width: 24px;
  background: ${(p) => (p.$active ? "#e4e4e4" : "transparent")};
`;

const SplitButton = styled.button`
  ${toolBase}
  justify-content: flex-start;
  gap: 4px;
  width: 36px;
  padding-left: 6px;
`;

const TextButton = styled.button`
  ${toolBase}
  gap: 4px;
  padding: 0 5px;
`;

const FilterSplit = styled.div`
  display: flex;
  height: 24px;
  margin: 0 -1px;
  border: 1px solid #cfcfcf;
  border-radius: 4px;
  overflow: hidden;

  button {
    display: flex;
    align-items: center;
    gap: 4px;
    padding: 0 4px;
  }

  button:first-child {
    padding: 0 0 0 5px;
    border-right: 1px solid #c6c6c6;
    background: #e2e2e2;
  }
`;

const Combo = styled.div`
  display: flex;
  align-items: center;
  width: ${(p) => p.$w}px;
  height: 24px;
  border: 1px solid #c4c6c8;
  border-radius: ${(p) => (p.$join === "left" ? "4px 0 0 4px" : p.$join === "right" ? "0 4px 4px 0" : "4px")};
  margin-left: ${(p) => (p.$join === "right" ? -5 : 0)}px;

  select {
    flex: 1;
    height: 22px;
    min-width: 0;
    margin-right: -18px;
    padding: 0 18px 0 ${(p) => (p.$w > 80 ? 11 : 9)}px;
    border: none;
    outline: none;
    appearance: none;
    background: transparent;
  }

  svg {
    margin-right: 3px;
    pointer-events: none;
  }
`;

const Spacer = styled.i`
  width: 0;
`;

const GroupFoot = styled.div`
  display: flex;
  align-items: center;
  height: 18px;
  padding: 0 4px;
`;

const GroupLabel = styled.span`
  flex: 1;
  color: #6a6a6a;
  text-align: center;
`;

const Launcher = styled.button`
  align-self: flex-end;
  margin-left: -7px;
`;

const Body = styled.div`
  display: flex;
  flex: 1;
  min-height: 0;
`;

const Workspace = styled.main`
  display: flex;
  flex: 1;
  flex-direction: column;
  min-width: 0;
`;

const SidePane = styled.aside`
  display: flex;
  flex-direction: column;
  align-items: center;
  width: 50px;
  padding: 14px 0 0 7px;
  border-left: 1px solid #c9cdd2;
`;

const SideButton = styled.button`
  display: grid;
  place-items: center;
  width: 24px;
  height: 40px;

  &:first-child {
    height: 20px;
    margin-bottom: 2px;
  }
`;

const Formula = styled.div`
  display: flex;
  gap: 9px;
  padding: 7px 12px 7px;
  background: linear-gradient(#e5e8eb, #ededed);
`;

const fieldBox = css`
  display: flex;
  align-items: center;
  height: 29px;
  border: 1px solid #ccd0d3;
  border-radius: 5px;
  background: #fff;
`;

const NameBox = styled.div`
  ${fieldBox}
  width: 163px;
  padding-right: 5px;

  input {
    flex: 1;
    text-align: center;
  }
`;

const FormulaBox = styled.div`
  ${fieldBox}
  flex: 1;
  gap: 14px;
  padding-left: 22px;

  input {
    flex: 1;
    margin-left: -7px;
    font-size: 15px;
  }
`;

const Fx = styled.em`
  font: italic 17px "Liberation Serif", serif;
`;

const SheetArea = styled.div`
  position: relative;
  display: flex;
  flex: 1;
  min-height: 0;
`;

const SheetPane = styled.div`
  position: relative;
  flex: 1;
  min-width: 0;
  overflow: hidden;
  background: #fff;
`;

const Table = styled.table`
  width: 100%;
  table-layout: fixed;
  border-spacing: 0;
  font-family: "Noto Sans CJK SC", sans-serif;
  font-size: 14px;
  line-height: 20px;

  td, th {
    padding: 0;
    overflow: hidden;
    white-space: nowrap;
  }
`;

const Col = styled.col`
  width: ${(p) => p.$w}px;
`;

const ColHead = styled.th`
  height: 15px;
  border-bottom: 2px solid #3f8f1f;
  background: #d9d9d9;
  color: #1d8460;
  font: 9px/13px "Open Sans", sans-serif;
  text-align: ${(p) => (p.$cut ? "right" : "center")};
`;

const Corner = styled.th`
  background: #ededed;

  i {
    display: block;
    width: 0;
    margin-left: 9px;
    border: 3px solid transparent;
    border-right-color: #666;
    border-bottom-color: #666;
  }
`;

const RowHead = styled.th`
  height: ${(p) => (p.$tall ? 38 : 25)}px;
  border-right: 1px solid #d2d2d2;
  border-bottom: 1px solid #d9d9d9;
  background: ${(p) => (p.$active ? "#cacaca" : "#eeeeee")};
  color: ${(p) => (p.$active ? "#1d8460" : "#555")};
  font: 9px/12px "Open Sans", sans-serif;
`;

const Cell = styled.td`
  border-right: 1px solid ${(p) => (p.$date ? "#9bc2e6" : p.$band ? "#dceaf6" : "#e2e2e2")};
  border-bottom: 1px solid ${(p) => (p.$data ? "#9bc2e6" : "#e2e2e2")};
  background: ${(p) => (p.$band ? "#dceaf6" : p.$tail ? "#e6e6e6" : "#fff")};
  color: #111;
  font-size: ${(p) => (p.$date ? 13 : 14)}px;
  font-weight: 300;
  text-align: center;

  && {
    padding-top: 2px;
  }
`;

const HeadCell = styled.th`
  position: relative;
  background: ${(p) => (p.$first ? "#5b9bd5" : "#538bc0")};
  color: ${(p) => (p.$first ? "#fff" : "#e4edf6")};
  font-weight: ${(p) => (p.$first ? 700 : 400)};
`;

const FilterArrow = styled.button`
  position: absolute;
  right: 1px;
  bottom: 1px;
  z-index: 1;
  width: 15px;
  height: 15px;
  border: 1px solid #c8ccd4;
  background: ${(p) => (p.$dim ? "#e6e9ee" : "#fff")};

  &::after {
    content: "";
    position: absolute;
    left: 3px;
    top: 5px;
    border: 4px solid transparent;
    border-width: 4px 4px 0;
    border-top-color: #1fb57c;
  }
`;

const Selection = styled.div`
  position: absolute;
  left: 22px;
  right: -3px;
  top: 38px;
  height: 28px;
  border: 3px solid #3f8f1f;
  border-left-width: 2px;
  pointer-events: none;
`;

const FillHandle = styled.i`
  position: absolute;
  left: 23px;
  top: 61px;
  width: 7px;
  height: 7px;
  border: 1px solid #fff;
  background: #3f8f1f;
`;

const ScrollTrack = styled.div`
  display: flex;
  flex-direction: column;
  align-items: center;
  gap: 8px;
  width: 17px;
  padding: 20px 0 6px;
  background: #e5e8ec;
`;

const Minus = styled.i`
  width: 8px;
  height: 2px;
  background: #a8abae;
`;

const ScrollThumb = styled.i`
  width: 8px;
  height: 180px;
  margin-bottom: auto;
  border-radius: 4px;
  background: #c3c5c8;
`;

const Triangle = styled.i`
  flex: none;
  width: 0;
  border: 3px solid transparent;
  ${(p) => {
    if (p.$side === "left") return "border-width: 4px 5px 4px 0; border-right-color: #555;";
    if (p.$side === "right") return "border-width: 4px 0 4px 5px; border-left-color: #555;";
    return p.$down
      ? "border-width: 5px 3px 0; border-top-color: #666;"
      : "border-width: 0 3px 5px; border-bottom-color: #666;";
  }}
`;

const StatusCaret = styled(Triangle)`
  margin-left: 5px;
`;

const Panel = styled.section`
  position: absolute;
  left: 918px;
  top: 66px;
  z-index: 2;
  width: 382px;
  border: 3px solid #fff;
  border-radius: 7px;
  background: #f7f7f7;
  box-shadow: 0 3px 12px rgba(0, 0, 0, 0.25);
  color: #000;
`;

const PanelTop = styled.div`
  display: flex;
  align-items: center;
  gap: 14px;
  height: 30px;
  padding: 0 17px 0 21px;
  background: #e5e5e5;
`;

const PanelTool = styled.button`
  display: flex;
  align-items: center;
  gap: 4px;
  color: ${(p) => (p.$muted ? "#b0b0b0" : "#000")};
`;

const ModeLabel = styled.label`
  display: flex;
  align-items: center;
  gap: 4px;
  margin-left: auto;
`;

const Switch = styled.input`
  width: 28px;
  height: 14px;
  margin: 0;
  border: 2px solid #5f9a3c;
  border-radius: 7px;
  appearance: none;
  background: radial-gradient(circle at 6px 5px, #fff 5px, #bdbdbd 6px);
`;

const SwitchText = styled.span`
  width: 12px;
  margin: 0 2px 0 -18px;
  font-size: 10px;
  text-align: center;
  pointer-events: none;
`;

const PanelBody = styled.div`
  padding: 0 11px 0 13px;
`;

const PanelTabs = styled.div`
  display: flex;
  height: 34px;
  margin-bottom: 8px;
`;

const PanelTab = styled.button`
  width: 72px;
  padding-top: 10px;
  border-bottom: 3px solid ${(p) => (p.$active ? "#5a9a32" : "transparent")};
  color: ${(p) => (p.$active ? "#5a9a32" : "#000")};
`;

const PanelActions = styled.div`
  display: flex;
  gap: 12px;
  margin-left: auto;
  padding: 8px 6px 0 0;
`;

const SearchBox = styled.div`
  display: flex;
  align-items: center;
  height: 24px;
  margin-bottom: 5px;
  padding: 0 4px 0 3px;
  border: 1px solid #0a78d0;
  background: #fff;

  input {
    flex: 1;
    height: 20px;
    padding-left: 7px;
  }

  input::placeholder {
    color: #a8a8a8;
  }

  svg {
    margin-left: 4px;
  }
`;

const TextCaret = styled.i`
  width: 1px;
  height: 16px;
  background: #000;
`;

const Tree = styled.div`
  border: 1px solid #b4bfcc;
  background: #fff;
`;

const TreeHead = styled.div`
  display: flex;
  align-items: center;
  height: 22px;
  margin: 1px;
  background: #e5e5e5;
`;

const TreeName = styled.span`
  display: flex;
  align-items: center;
  gap: 3px;
  width: 76px;
  height: 20px;
  padding-left: 19px;
  border-right: 1px solid #c9c9c9;
  color: #5a9a32;
`;

const TreeCount = styled(TreeName)`
  padding-left: 16px;
  border: none;
  color: #222;
`;

const TreeOptions = styled.button`
  display: flex;
  align-items: center;
  gap: 5px;
  margin-left: auto;
  padding-right: 12px;
`;

const TreeBody = styled.div`
  height: 301px;
`;

const TreeRow = styled.div`
  display: flex;
  align-items: center;
  gap: 4px;
  height: 23px;
  padding-left: ${(p) => 5 + p.$level * 20}px;
`;

const Expander = styled.button`
  display: grid;
  place-items: center;
  flex: none;
  width: 12px;
`;

const TreeLine = styled.div`
  display: flex;
  flex: 1;
  align-items: center;
  gap: 6px;
  height: 23px;
  margin-right: 1px;
  padding-left: 4px;
  background: ${(p) => (p.$active ? "#f0f0f0" : "transparent")};

  input {
    border-color: ${(p) => (p.$active ? "#2a3550" : "#b5b5b5")};
  }
`;

const Check = styled.label`
  display: flex;
  align-items: center;
  gap: 4px;

  input {
    width: 14px;
    height: 14px;
    margin: 0;
    border-width: 1px;
    border-style: solid;
    border-radius: 2px;
    appearance: none;
    background: #fff;
  }

  input:checked::after {
    content: "";
    display: block;
    width: 8px;
    height: 5px;
    margin: 2px;
    border: solid #222c3c;
    border-width: 0 0 2px 2px;
    transform: rotate(-45deg);
  }

  a {
    display: inline-block;
    border-bottom: 1px solid #1a0dd8;
    color: #1a0dd8;
    line-height: 18px;
    text-decoration: none;
  }
`;

const Count = styled.span`
  color: #999;
  font-size: 13px;
`;

const OnlyButton = styled.button`
  height: 23px;
  margin-left: auto;
  padding: 0 7px;
  background: #5a9a32;
  color: #fff;
`;

const TreeFoot = styled.div`
  display: flex;
  height: 27px;
  border-top: 1px solid #b4bfcc;
  background: #f7f7f7;

  button {
    width: 25%;
  }

  button + button {
    border-left: 1px solid #b4bfcc;
  }

  button:last-child {
    padding-right: 18px;
  }
`;

const ShowAll = styled.div`
  height: 31px;
  padding-top: 10px;
  border-bottom: 1px solid #b4bfcc;
  color: #2a2a3c;
`;

const PanelFoot = styled.div`
  display: flex;
  align-items: center;
  gap: 6px;
  height: 40px;
`;

const Analyse = styled.button`
  display: flex;
  align-items: center;
  gap: 5px;
  margin: 0 auto 0 7px;
`;

const DialogButton = styled.button`
  width: 52px;
  height: 24px;
  border: 1px solid #d0d0d0;
  border-bottom-color: #a8a8a8;
  border-radius: 4px;
  background: #fff;
`;

const Pointer = styled.svg`
  position: absolute;
  left: 200px;
  top: 181px;
`;

const TagOverlay = styled.div`
  position: absolute;
  left: 639px;
  bottom: -17px;
  z-index: 1;
  display: flex;
  justify-content: space-between;
  width: 535px;
  height: 128px;
  padding: 0 9px 0 13px;
  background: rgba(255, 255, 255, 0.6);
  pointer-events: none;
`;

const TagWords = styled.div`
  display: flex;
  flex-direction: column;
  justify-content: space-between;
`;

const TagTitle = styled.span`
  color: #ff2f2f;
  font: 900 56px/70px "Noto Sans CJK SC", sans-serif;
  white-space: nowrap;
`;

const TagUrl = styled.span`
  color: #2d80ff;
  font: 700 42px/56px "Liberation Serif", serif;
`;

const TagLogo = styled.span`
  width: 214px;
  border-radius: 32px;
  background: #2d80ff;
  color: #fff;
  font: 700 102px/118px "Noto Sans CJK SC", sans-serif;
  text-align: center;
`;

const TabsBar = styled.div`
  display: flex;
  flex: none;
  height: 26px;
  border-top: 1px solid #cfd2d5;
`;

const TabNav = styled.div`
  display: flex;
  width: 102px;
  padding-left: 9px;
`;

const NavButton = styled.button`
  display: grid;
  place-items: center;
  width: 22px;
  height: 24px;
`;

const SheetTab = styled.button`
  height: 23px;
  padding: 0 ${(p) => (p.$latin ? "12px 0 13px" : "11px 0 12px")};
  border-right: 1px solid ${(p) => (p.$bg ? "transparent" : "#c2c6ca")};
  border-radius: ${(p) => (p.$bg ? "0 0 6px 6px" : "0")};
  background: ${(p) => p.$bg || "transparent"};
  color: ${(p) => (p.$active ? "#0a7d50" : "#222")};
  font-weight: ${(p) => (p.$active ? 700 : 400)};
`;

const HScroll = styled.div`
  display: flex;
  flex: 1;
  align-items: center;
  margin-left: 74px;
  padding-right: 31px;
`;

const HThumb = styled.i`
  width: 46px;
  height: 8px;
  margin: 0 auto 0 11px;
  border-radius: 4px;
  background: #c3c5c8;
`;

const Status = styled.footer`
  display: flex;
  flex: none;
  align-items: center;
  height: 24px;
  padding: 0 1px 0 13px;
  border-top: 1px solid #cfd2d5;
`;

const StatusTool = styled.button`
  display: flex;
  align-items: center;
  gap: 4px;
  padding: 0 13px 0 ${(p) => (p.$even ? 13 : 6)}px;
`;

const Stats = styled.div`
  display: flex;
  gap: 8px;
  margin: 0 auto 0 8px;
`;

const ViewButton = styled.button`
  display: grid;
  place-items: center;
  width: 24px;
  height: 23px;
  margin: 0 4px;
  border-radius: 4px;
  background: ${(p) => (p.$active ? "#cfd1d4" : "transparent")};
`;

const ZoomText = styled.button`
  display: flex;
  align-items: center;
  gap: 14px;
  padding: 0 8px 0 22px;
`;

const Zoom = styled.input`
  width: 106px;
  height: 10px;
  margin: 0 4px;
  appearance: none;
  background: linear-gradient(#2f5bd8, #2f5bd8) 0 50% / 28% 2px no-repeat,
    linear-gradient(#b8babd, #b8babd) 0 50% / 100% 2px no-repeat;

  &::-webkit-slider-thumb {
    width: 10px;
    height: 10px;
    border: 3px solid #fff;
    border-radius: 50%;
    appearance: none;
    background: #888;
  }
`;

const ImeBar = styled.div`
  position: absolute;
  right: -13px;
  bottom: 66px;
  z-index: 3;
  display: flex;
  align-items: center;
  gap: 10px;
  height: 26px;
  border: 1px solid #b3cbe8;
  border-left: none;
  background: #fff;

  svg:first-child {
    margin: 0 -6px 0 -26px;
  }
`;

const ImeText = styled.b`
  color: #0a6fd0;
  font-size: 15px;
`;

const ArrowLayer = styled.svg`
  position: absolute;
  left: 837px;
  top: 160px;
  z-index: 4;
  pointer-events: none;
  filter: drop-shadow(2px 3px 2px rgba(0, 0, 0, 0.5));
`;

const SiteOverlay = styled.div`
  position: absolute;
  right: 10px;
  bottom: 5px;
  z-index: 5;
  display: flex;
  align-items: center;
  opacity: 0.85;
  pointer-events: none;
`;

const SiteName = styled.div`
  color: #5b9fd6;
  font-size: 21px;
  font-weight: 500;
  line-height: 24px;
`;

const SiteUrl = styled.div`
  color: #55b878;
  font: 700 16px/20px "Liberation Sans", sans-serif;
`;
